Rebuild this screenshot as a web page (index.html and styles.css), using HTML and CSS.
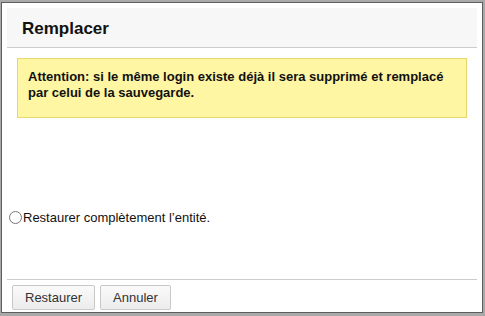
FILE: index.html
```html
<!DOCTYPE html>
<html lang="fr">

<head>
    <meta charset="UTF-8">
    <title>Remplacer</title>
    <link rel="stylesheet" href="styles.css">
</head>

<body>
    <div class="dialog">
        <div class="dialog-header">
            <h3 class="dialog-title">Remplacer</h3>
        </div>
        <div class="dialog-body">
            <div class="warning">
                Attention: si le même login existe déjà il sera supprimé et remplacé par celui de la sauvegarde.
            </div>
            <label class="option">
                <input type="radio" name="restore" class="option-radio">Restaurer complètement l’entité.
            </label>
        </div>
        <div class="dialog-footer">
            <button type="button" class="btn">Restaurer</button>
            <button type="button" class="btn">Annuler</button>
        </div>
    </div>
</body>

</html>
```

FILE: styles.css
```css
/* Reset */
* {
    margin: 0;
    padding: 0;
    box-sizing: border-box;
}

body {
    font-family: 'Liberation Sans', Arial, sans-serif;
    background-color: #a9a9a9;
    color: #111;
    width: 485px;
    height: 316px;
    overflow: hidden;
}

/* Window */
.dialog {
    margin: 2px 0 0 1px;
    width: 482px;
    height: 311px;
    background-color: #fff;
    border: 1px solid #5e5e5e;
    padding: 5px 5px 0;
    display: flex;
    flex-direction: column;
}

/* Header */
.dialog-header {
    background-color: #f7f7f7;
    border-bottom: 1px solid #cccccc;
    height: 40px;
    padding-left: 15px;
    display: flex;
    align-items: center;
}

.dialog-title {
    font-size: 17px;
    font-weight: 700;
    color: #111;
    padding-top: 2px;
}

/* Body */
.dialog-body {
    flex: 1;
    padding: 10px 10px 0;
}

.warning {
    background-color: #fff6a4;
    border: 1px solid #e7d86d;
    height: 60px;
    padding: 10px 10px 0;
    font-size: 13px;
    font-weight: 700;
    line-height: 16px;
    color: #111;
}

.option {
    display: flex;
    align-items: center;
    margin: 92px 0 0 -8px;
    font-size: 13px;
    color: #111;
}

.option-radio {
    width: 13px;
    height: 13px;
    margin: 0 1px 0 0;
}

/* Footer */
.dialog-footer {
    border-top: 1px solid #cccccc;
    height: 33px;
    padding: 5px 5px 0;
    display: flex;
    gap: 5px;
}

.btn {
    font-family: 'Liberation Sans', Arial, sans-serif;
    font-size: 13px;
    color: #333;
    height: 25px;
    padding: 0 12px;
    background: linear-gradient(#fafafa, #ececec);
    border: 1px solid #c8c8c8;
    border-radius: 2px;
    cursor: pointer;
}
```
